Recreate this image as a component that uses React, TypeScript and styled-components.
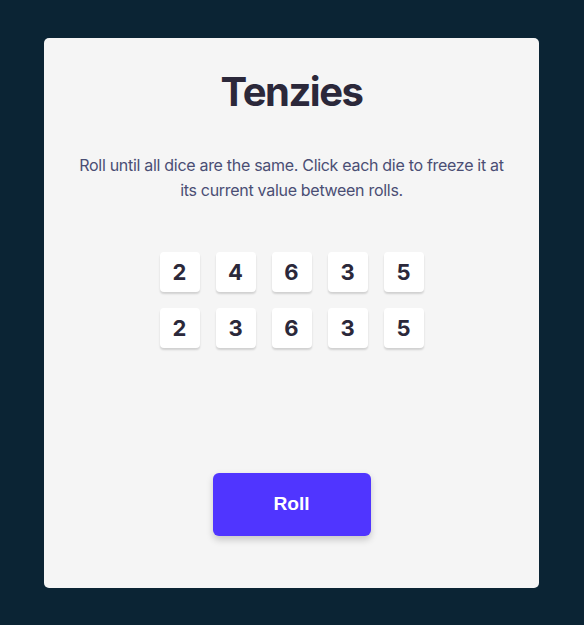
import React from "react";
import styled, { createGlobalStyle } from "styled-components";

const GlobalStyle = createGlobalStyle`
  html, body { margin: 0; padding: 0; }
  body { background: #0B2434; }
  #root { min-height: 100vh; }
`;

const Page = styled.main`
  min-height: 100vh;
  box-sizing: border-box;
  padding-right: 1px;
  display: flex;
  align-items: center;
  justify-content: center;
  background: #0b2434;
`;

const Card = styled.section`
  width: 495px;
  height: 550px;
  box-sizing: border-box;
  background: #f5f5f5;
  border-radius: 5px;
  padding: 30px 34px 52px;
  display: flex;
  flex-direction: column;
  align-items: center;
`;

const Title = styled.h1`
  margin: 0;
  font-family: Inter, "Liberation Sans", sans-serif;
  font-size: 40px;
  line-height: 48px;
  font-weight: 700;
  color: #2b283a;
  letter-spacing: -1.5px;
`;

const Description = styled.p`
  margin: 37px 0 0;
  font-family: Inter, "Liberation Sans", sans-serif;
  font-size: 16px;
  line-height: 25.6px;
  font-weight: 400;
  color: #4a4e74;
  text-align: center;
  letter-spacing: -0.3px;
`;

const DiceGrid = styled.div`
  margin-top: 48px;
  display: grid;
  grid-template-columns: repeat(5, 40px);
  gap: 16px;
`;

const Die = styled.button<{ $held?: boolean }>`
  width: 40px;
  height: 40px;
  padding: 0;
  border: none;
  border-radius: 4px;
  background: ${(p) => (p.$held ? "#59E391" : "#ffffff")};
  box-shadow: 0 2px 2px rgba(0, 0, 0, 0.15);
  font-family: Inter, "Liberation Sans", sans-serif;
  font-size: 22px;
  font-weight: 700;
  color: #2b283a;
  display: flex;
  align-items: center;
  justify-content: center;
  cursor: pointer;
`;

const RollButton = styled.button`
  margin-top: auto;
  width: 158px;
  height: 63px;
  border: none;
  border-radius: 6px;
  background: #5035ff;
  color: #ffffff;
  font-family: "Liberation Sans", Arial, sans-serif;
  font-size: 19.2px;
  font-weight: 700;
  box-shadow: 0 3.2px 7.68px rgba(0, 0, 0, 0.18);
  cursor: pointer;
`;

const dice = [2, 4, 6, 3, 5, 2, 3, 6, 3, 5];

export default function App() {
  return (
    <>
      <GlobalStyle />
      <Page>
        <Card>
          <Title>Tenzies</Title>
          <Description>
            Roll until all dice are the same. Click each die to freeze it at its
            current value between rolls.
          </Description>
          <DiceGrid>
            {dice.map((v, i) => (
              <Die key={i}>{v}</Die>
            ))}
          </DiceGrid>
          <RollButton>Roll</RollButton>
        </Card>
      </Page>
    </>
  );
}
